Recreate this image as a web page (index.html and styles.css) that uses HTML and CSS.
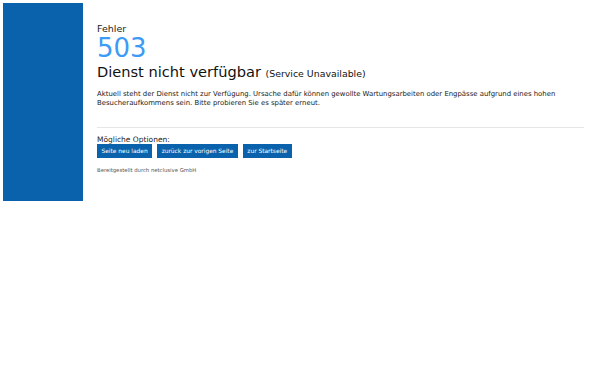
FILE: index.html
```html
<!DOCTYPE html>
<html lang="de">
<head>
<meta charset="utf-8">
<title>503 Dienst nicht verfügbar</title>
<link rel="stylesheet" href="styles.css">
</head>
<body>
<div class="page">
  <div class="side"></div>
  <div class="main">
    <div class="label">Fehler</div>
    <div class="code">503</div>
    <h1 class="title">Dienst nicht verfügbar <small>(Service Unavailable)</small></h1>
    <p class="text">Aktuell steht der Dienst nicht zur Verfügung. Ursache dafür können gewollte Wartungsarbeiten oder Engpässe aufgrund eines hohen Besucheraufkommens sein. Bitte probieren Sie es später erneut.</p>
    <hr class="rule">
    <div class="options-label">Mögliche Optionen:</div>
    <div class="buttons">
      <a class="btn">Seite neu laden</a>
      <a class="btn">zurück zur vorigen Seite</a>
      <a class="btn">zur Startseite</a>
    </div>
    <div class="footer">Bereitgestellt durch netclusive GmbH</div>
  </div>
</div>
</body>
</html>
```
FILE: styles.css
```css
html, body { margin: 0; padding: 0; background: #fff; }
body { font-family: "DejaVu Sans", Verdana, sans-serif; color: #222; }
.page { display: flex; padding: 3px 16px 0 3px; gap: 14px; }
.side { width: 80px; height: 198px; background: #0b62ac; flex: none; }
.main { flex: 1; padding-top: 20px; }
.label { font-size: 9.5px; line-height: 11px; color: #222; }
.code { font-size: 26px; line-height: 28px; color: #3d9bf5; margin-top: 0; }
.title { font-size: 14.6px; font-weight: normal; line-height: 18px; margin: 1px 0 0; color: #111; }
.title small { font-size: 9.4px; }
.text { font-size: 6.9px; line-height: 9.3px; margin: 7px 0 0; color: #1a1a1a; }
.rule { border: 0; border-top: 1px solid #e6e6e6; margin: 18px 0 0; height: 0; }
.options-label { font-size: 7.5px; line-height: 9px; margin-top: 7px; color: #222; }
.buttons { display: flex; gap: 5px; margin-top: 0; }
.btn { background: #0b62ac; color: #fff; font-size: 5.9px; line-height: 14px; padding: 0 4.5px; }
.footer { font-size: 5.3px; line-height: 6px; color: #555; margin-top: 9px; }
```
